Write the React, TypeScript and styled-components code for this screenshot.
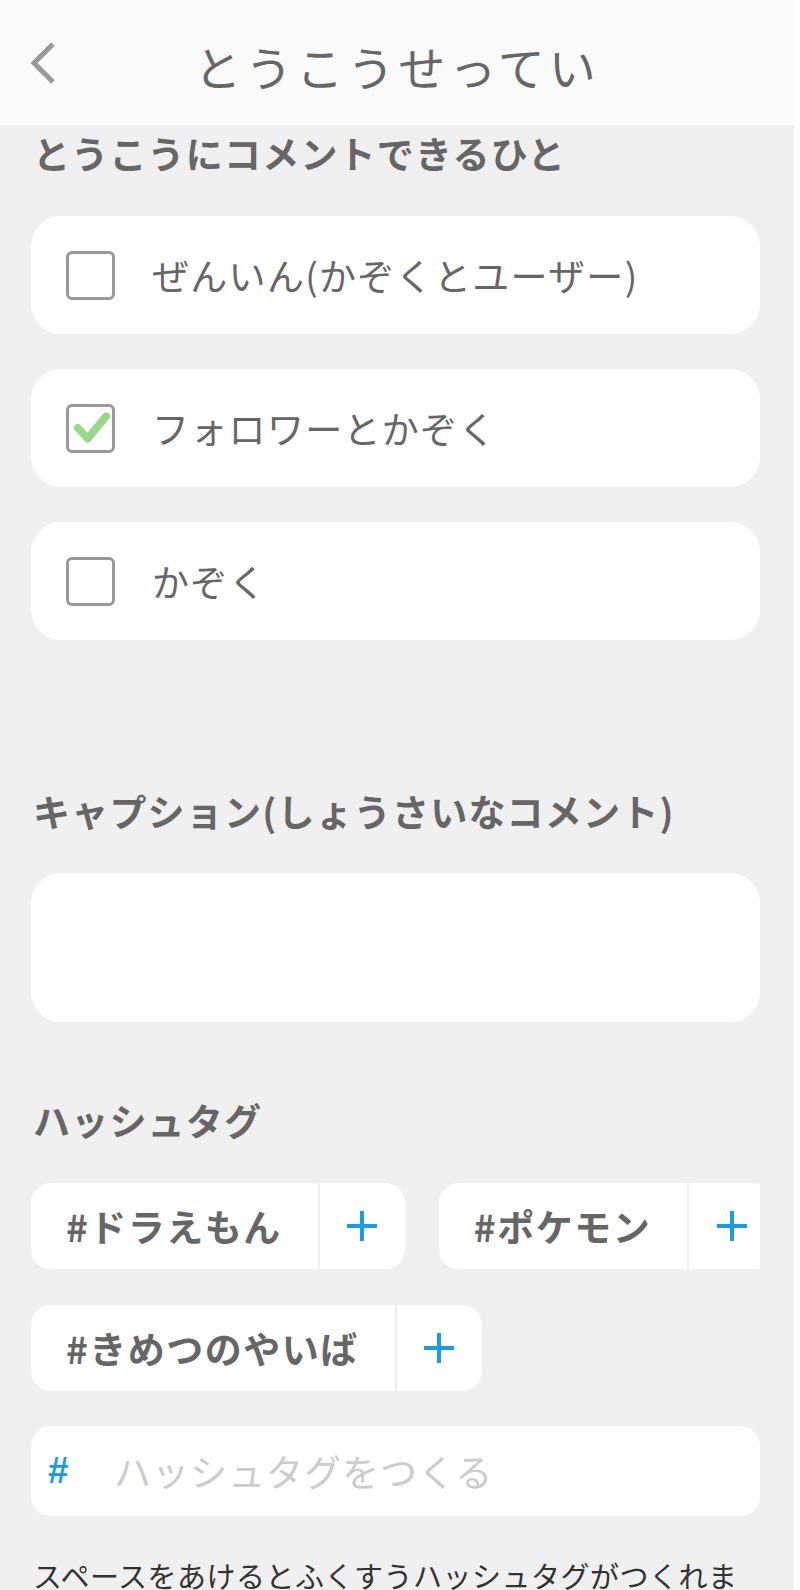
import React from "react"
import styled, { createGlobalStyle } from "styled-components"

const GlobalStyle = createGlobalStyle`
  html, body {
    margin: 0;
    padding: 0;
    background: #ffffff;
  }
  body {
    font-family: "Noto Sans CJK JP", "Noto Sans", sans-serif;
  }
`

const Page = styled.div`
  width: 794px;
  height: 1590px;
  overflow: hidden;
  background: #f0f0f0;
`

const Header = styled.header`
  height: 125px;
  background: #fafafa;
  display: grid;
  grid-template-columns: 1fr auto 1fr;
  align-items: center;
`

const BackButton = styled.button`
  justify-self: start;
  margin-left: 26px;
  padding: 0;
  border: none;
  background: none;
  display: flex;
`

const Title = styled.h1`
  margin: 0;
  font-size: 47px;
  font-weight: 400;
  letter-spacing: 4px;
  color: #666;
  line-height: 1;
  padding-top: 6px;
`

const Content = styled.main`
  padding: 0 34px 0 31px;
  display: flex;
  flex-direction: column;
`

const SectionLabel = styled.h2<{ top: number; bottom: number }>`
  margin: ${p => p.top}px 0 ${p => p.bottom}px 2px;
  font-size: 37px;
  line-height: 44px;
  font-weight: 700;
  letter-spacing: 1.2px;
  color: #666;
`

const OptionList = styled.div`
  display: flex;
  flex-direction: column;
  gap: 35px;
`

const OptionCard = styled.label`
  height: 118px;
  background: #fff;
  border-radius: 30px;
  display: flex;
  align-items: center;
  padding-left: 35px;
  gap: 37px;
`

const CheckBox = styled.span<{ checked: boolean }>`
  position: relative;
  width: 49px;
  height: 49px;
  box-sizing: border-box;
  border: 3px solid #999;
  border-radius: 6px;
  display: flex;
  align-items: center;
  justify-content: center;
`

const OptionText = styled.span`
  font-size: 37px;
  color: #666;
  letter-spacing: 1.3px;
`

const CaptionBox = styled.div`
  height: 149px;
  background: #fff;
  border-radius: 30px;
`

const TagRows = styled.div`
  display: flex;
  flex-direction: column;
  gap: 36px;
`

const TagRow = styled.div`
  display: flex;
  gap: 34px;
  overflow: hidden;
`

const Tag = styled.div`
  flex-shrink: 0;
  height: 86px;
  background: #fff;
  border-radius: 20px;
  display: flex;
  align-items: stretch;
`

const TagName = styled.span`
  display: flex;
  align-items: center;
  padding: 0 36px 0 35px;
  font-size: 37px;
  font-weight: 700;
  letter-spacing: 1.5px;
  color: #666;
  border-right: 2px solid #eeeeee;
`

const AddButton = styled.button`
  width: 85px;
  border: none;
  background: none;
  padding: 0;
  display: flex;
  align-items: center;
  justify-content: center;
`

const HashInput = styled.div`
  margin-top: 35px;
  height: 90px;
  background: #fff;
  border-radius: 20px;
  display: flex;
  align-items: center;
  padding-left: 17px;
`

const HashMark = styled.span`
  font-family: "Liberation Sans", sans-serif;
  font-size: 37px;
  font-weight: 700;
  color: #1a9be6;
  width: 66px;
`

const Placeholder = styled.span`
  font-size: 37px;
  color: #cccccc;
  letter-spacing: 1px;
`

const Note = styled.p`
  margin: 41px 0 0 2px;
  font-size: 29px;
  line-height: 36px;
  letter-spacing: 0.5px;
  color: #333;
`

const BackIcon = () => (
  <svg width="32" height="44" viewBox="0 0 32 44">
    <polyline points="27,3 8,22 27,41" fill="none" stroke="#999" strokeWidth="5" />
  </svg>
)

const CheckIcon = () => (
  <svg width="40" height="34" viewBox="0 0 40 34" style={{ marginLeft: 4 }}>
    <polyline
      points="5,17 15,28 34,5"
      fill="none"
      stroke="#9bd68a"
      strokeWidth="8"
      strokeLinecap="round"
      strokeLinejoin="round"
    />
  </svg>
)

const PlusIcon = () => (
  <svg width="30" height="30" viewBox="0 0 30 30">
    <path d="M15 0v30M0 15h30" stroke="#1a9be6" strokeWidth="4" />
  </svg>
)

const options = [
  { label: "ぜんいん(かぞくとユーザー)", checked: false },
  { label: "フォロワーとかぞく", checked: true },
  { label: "かぞく", checked: false },
]

const tagRows = [["#ドラえもん", "#ポケモン"], ["#きめつのやいば"]]

const App: React.FunctionComponent = () => {
  return (
    <Page>
      <GlobalStyle />
      <Header>
        <BackButton>
          <BackIcon />
        </BackButton>
        <Title>とうこうせってい</Title>
      </Header>
      <Content>
        <SectionLabel top={6} bottom={41}>
          とうこうにコメントできるひと
        </SectionLabel>
        <OptionList>
          {options.map(o => (
            <OptionCard key={o.label}>
              <CheckBox checked={o.checked}>{o.checked && <CheckIcon />}</CheckBox>
              <OptionText>{o.label}</OptionText>
            </OptionCard>
          ))}
        </OptionList>

        <SectionLabel top={149} bottom={40}>
          キャプション(しょうさいなコメント)
        </SectionLabel>
        <CaptionBox />

        <SectionLabel top={76} bottom={41}>
          ハッシュタグ
        </SectionLabel>
        <TagRows>
          {tagRows.map((row, i) => (
            <TagRow key={i}>
              {row.map(t => (
                <Tag key={t}>
                  <TagName>{t}</TagName>
                  <AddButton>
                    <PlusIcon />
                  </AddButton>
                </Tag>
              ))}
            </TagRow>
          ))}
        </TagRows>

        <HashInput>
          <HashMark>#</HashMark>
          <Placeholder>ハッシュタグをつくる</Placeholder>
        </HashInput>

        <Note>スペースをあけるとふくすうハッシュタグがつくれます</Note>
      </Content>
    </Page>
  )
}

export default App
